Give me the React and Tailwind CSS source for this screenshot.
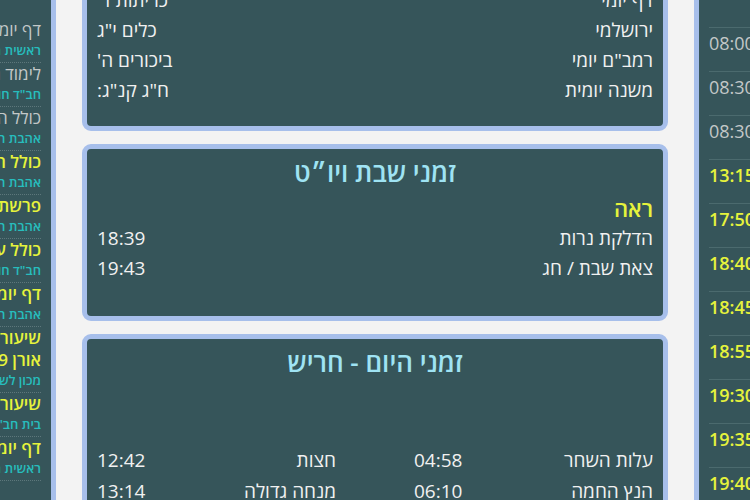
import React from "react";

const lessons = [
  { t: "דף יומי", s: "ראשית חכמה", y: false },
  { t: "לימוד חסידות", s: "חב\"ד חולון", y: false },
  { t: "כולל הלכה", s: "אהבת חסד", y: false },
  { t: "כולל הערב", s: "אהבת חסד", y: true },
  { t: "פרשת השבוע", s: "אהבת חסד", y: true },
  { t: "כולל ערב", s: "חב\"ד חולון", y: true },
  { t: "דף יומי", s: "אהבת חסד", y: true },
  { t: "שיעור תורה", t2: "אורן 4/9", s: "מכון לשלום", y: true },
  { t: "שיעור בגמרא", s: "בית חב\"ד", y: true },
  { t: "דף יומי", s: "ראשית השנה", y: true },
];

const prayers = [
  { n: "שחרית א", t: "08:00", y: false },
  { n: "שחרית ב", t: "08:30", y: false },
  { n: "שחרית ג", t: "08:30", y: false },
  { n: "מנחה גדולה", t: "13:15", y: true },
  { n: "מנחה", t: "17:50", y: true },
  { n: "מנחה ב", t: "18:40", y: true },
  { n: "ערבית", t: "18:45", y: true },
  { n: "ערבית ב", t: "18:55", y: true },
  { n: "ערבית ג", t: "19:30", y: true },
  { n: "ערבית ד", t: "19:35", y: true },
  { n: "ערבית ה", t: "19:40", y: true },
];

const daily = [
  ["דף יומי", "כריתות ד'"],
  ["ירושלמי", "כלים י\"ג"],
  ["רמב\"ם יומי", "ביכורים ה'"],
  ["משנה יומית", "ח\"ג קנ\"ג:"],
];

function Row({ a, b }) {
  return (
    <div className="flex justify-between leading-[30px] text-[19px] text-[#f1f1f1]">
      <span>{a}</span>
      <span>{b}</span>
    </div>
  );
}

export default function App() {
  return (
    <div
      dir="rtl"
      className="w-[750px] h-[500px] overflow-hidden bg-[#f3f3f3] flex gap-[26px] font-['Open_Sans','Liberation_Sans',sans-serif]"
    >
      {/* right column: prayer times */}
      <div className="shrink-0 w-[200px] mr-[-144px] mt-[-20px] h-[560px] rounded-[9px] border-[5px] border-[#a7bfeb] bg-[#36555a] px-[10px] pt-[42px]">
        {prayers.map((p, i) => (
          <div
            key={i}
            className={`flex justify-between border-t border-[#4b6a6e] pt-[4px] pb-[17px] leading-[22px] text-[18px] ${
              p.y ? "text-[#e6f33c] font-semibold" : "text-[#c3c8c8]"
            }`}
          >
            <span>{p.n}</span>
            <span>{p.t}</span>
          </div>
        ))}
      </div>

      {/* center column */}
      <div className="shrink-0 w-[586px] mt-[-60px] flex flex-col gap-[13px]">
        <div className="rounded-[9px] border-[5px] border-[#a7bfeb] bg-[#36555a] px-[10px] pt-[6px] pb-[21px]">
          <div className="text-center text-[26px] leading-[34px] text-[#9fe3f3] font-semibold">לימוד יומי</div>
          {daily.map((d, i) => (
            <Row key={i} a={d[0]} b={d[1]} />
          ))}
        </div>

        <div className="rounded-[9px] border-[5px] border-[#a7bfeb] bg-[#36555a] px-[10px] pt-[6px] pb-[33px]">
          <div className="text-center text-[26px] leading-[34px] text-[#9fe3f3] font-semibold">זמני שבת ויו״ט</div>
          <div className="mt-[4px] leading-[30px] text-[22px] font-semibold text-[#e6f33c]">ראה</div>
          <Row a="הדלקת נרות" b="18:39" />
          <Row a="צאת שבת / חג" b="19:43" />
        </div>

        <div className="h-[200px] rounded-[9px] border-[5px] border-[#a7bfeb] bg-[#36555a] px-[10px] pt-[6px]">
          <div className="text-center text-[26px] leading-[34px] text-[#9fe3f3] font-semibold">זמני היום - חריש</div>
          <div className="mt-[66px] grid grid-cols-2 gap-x-[78px] gap-y-[1px]">
            <Row a="עלות השחר" b="04:58" />
            <Row a="חצות" b="12:42" />
            <Row a="הנץ החמה" b="06:10" />
            <Row a="מנחה גדולה" b="13:14" />
          </div>
        </div>
      </div>

      {/* left column: lessons */}
      <div className="shrink-0 w-[200px] mt-[-20px] h-[560px] rounded-[9px] border-[5px] border-[#a7bfeb] bg-[#36555a] pr-[10px] pl-[10px] pt-[34px]">
        {lessons.map((l, i) => (
          <div key={i} className="border-b border-dotted border-[#5d777b] pb-[3px] whitespace-nowrap">
            <div
              className={`text-[17px] leading-[22px] ${
                l.y ? "text-[#e6f33c] font-semibold" : "text-[#c3c8c8]"
              }`}
            >
              {l.t}
            </div>
            {l.t2 && (
              <div className="text-[17px] leading-[22px] text-[#e6f33c] font-semibold">{l.t2}</div>
            )}
            <div className="text-[13px] leading-[18px] font-semibold text-[#27bdbd]">{l.s}</div>
          </div>
        ))}
      </div>
    </div>
  );
}
